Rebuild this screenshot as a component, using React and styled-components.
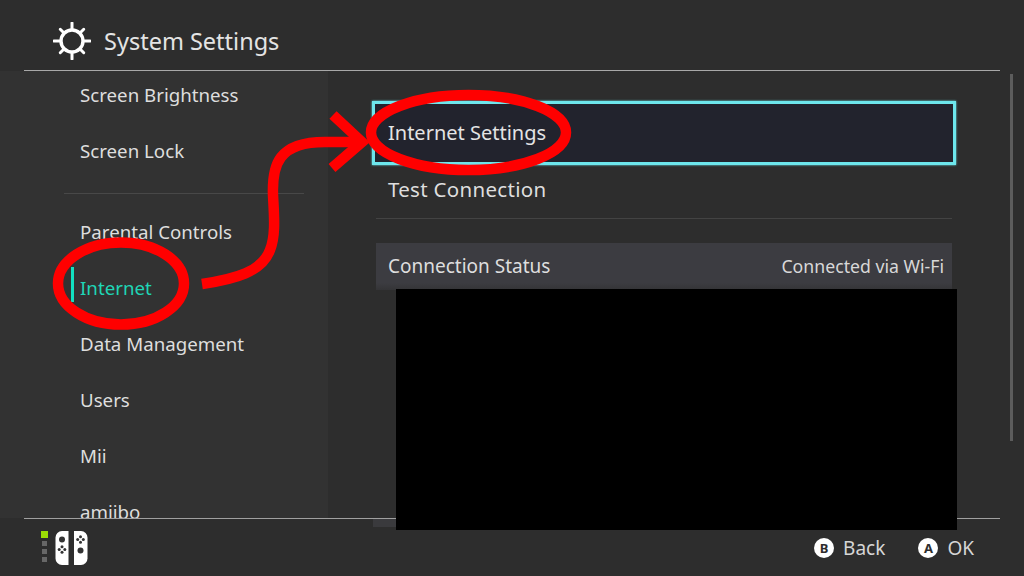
import React from 'react';
import styled, { createGlobalStyle } from 'styled-components';

const GlobalStyle = createGlobalStyle`
  html, body {
    margin: 0;
    background: #2d2d2d;
  }
`;

const Page = styled.div`
  position: relative;
  width: 1024px;
  height: 576px;
  overflow: hidden;
  display: flex;
  flex-direction: column;
  background: #2d2d2d;
  color: #dedede;
  font-family: "Noto Sans", "Open Sans", sans-serif;
`;

const Header = styled.header`
  flex: none;
  box-sizing: border-box;
  height: 71px;
  margin: 0 24px;
  padding: 12px 0 0 29px;
  display: flex;
  align-items: center;
  gap: 13px;
  border-bottom: 1px solid #a8a8a8;
`;

const Title = styled.h1`
  margin: 0;
  font-size: 23.500px;
  font-weight: 400;
  color: #e4e4e4;
`;

const Body = styled.div`
  flex: 1;
  min-height: 0;
  display: flex;
`;

const Sidebar = styled.nav`
  flex: none;
  width: 328px;
  overflow: hidden;
  background: #323232;
`;

const SideList = styled.div`
  margin-top: -5px;
`;

const SideItem = styled.div`
  height: 56px;
  padding-left: 71px;
  display: flex;
  align-items: center;
  font-size: 18.700px;
  color: ${p => (p.$active ? '#1fd6b6' : '#dedede')};
`;

const Marker = styled.span`
  flex: none;
  width: 3px;
  height: 35px;
  margin: 0 6px 5px 0;
  background: ${p => (p.$active ? '#12e0c0' : 'transparent')};
`;

const SideDivider = styled.div`
  height: 1px;
  margin: 15px 24px 9px 64px;
  background: #484848;
`;

const Content = styled.main`
  flex: none;
  width: 576px;
  margin-left: 48px;
  padding-top: 30px;
`;

const SelectedRow = styled.div`
  box-sizing: border-box;
  height: 64px;
  margin: 0 -4px;
  padding: 0 0 2px 13px;
  display: flex;
  align-items: center;
  font-size: 20px;
  background: #22232d;
  border: 3px solid #6de6ec;
  box-shadow: 0 0 2px #6de6ec;
  color: #e4e4e4;
`;

const PlainRow = styled.div`
  box-sizing: border-box;
  height: 50px;
  margin-bottom: 3px;
  padding: 0 0 2px 12px;
  display: flex;
  align-items: center;
  font-size: 20.500px;
  letter-spacing: 0.3px;
`;

const RowDivider = styled.div`
  height: 1px;
  background: #434343;
`;

const InfoRow = styled.div`
  box-sizing: border-box;
  height: 47px;
  margin-top: 24px;
  padding: 0 8px 2px 12px;
  display: flex;
  align-items: center;
  justify-content: space-between;
  font-size: 19px;
  background: linear-gradient(#3c3c41 85%, #343436);
`;

const InfoValue = styled.span`
  font-size: 17.700px;
  color: #d8d8d8;
`;

const ScrollBar = styled.div`
  flex: none;
  width: 3px;
  height: 367px;
  margin: 3px 11px 0 auto;
  background: #5c5c5c;
`;

const Footer = styled.footer`
  position: relative;
  flex: none;
  height: 57px;
  margin: 0 24px;
  display: flex;
  align-items: center;
  justify-content: space-between;
  border-top: 1px solid #a0a0a0;
`;

const FooterRemnant = styled.div`
  position: absolute;
  left: 349px;
  top: 0;
  width: 30px;
  height: 8px;
  background: #3a3a3d;
`;

const Controllers = styled.div`
  margin-left: 17px;
  display: flex;
  align-items: center;
  gap: 7px;
`;

const Leds = styled.div`
  display: flex;
  flex-direction: column;
  align-items: center;
  gap: 3px;
  margin-top: -2px;
`;

const Led = styled.span`
  width: ${p => (p.$on ? '7px' : '5px')};
  height: ${p => (p.$on ? '7px' : '5px')};
  background: ${p => (p.$on ? '#9bdc05' : '#676767')};
`;

const Hints = styled.div`
  display: flex;
  align-items: center;
  gap: 33px;
  margin-right: 26px;
`;

const Hint = styled.div`
  display: flex;
  align-items: center;
  gap: 9px;
  font-size: 19px;
  color: #d6d6d6;
`;

const Badge = styled.span`
  width: 20px;
  height: 20px;
  border-radius: 50%;
  background: #fff;
  color: #2d2d2d;
  font-size: 13px;
  font-weight: 700;
  display: flex;
  align-items: center;
  justify-content: center;
`;

const Redacted = styled.div`
  position: absolute;
  left: 396px;
  top: 289px;
  width: 561px;
  height: 241px;
  background: #000;
`;

const Annotation = styled.svg`
  position: absolute;
  left: 0;
  top: 0;
  pointer-events: none;
`;

const GearIcon = () => (
  <svg width="38" height="38" viewBox="0 0 38 38" fill="none" stroke="#fff">
    <circle cx="19" cy="19" r="11" strokeWidth="3.4" />
    {[0, 45, 90, 135, 180, 225, 270, 315].map(a => (
      <line
        key={a}
        x1="19"
        y1="7"
        x2="19"
        y2={a % 90 === 0 ? 1 : 2.4}
        strokeWidth="3"
        strokeLinecap="round"
        transform={`rotate(${a} 19 19)`}
      />
    ))}
  </svg>
);

const DotPad = ({ cx, cy }) => (
  <g fill="#333">
    <circle cx={cx} cy={cy - 2.8} r="1.5" />
    <circle cx={cx} cy={cy + 2.8} r="1.5" />
    <circle cx={cx - 2.8} cy={cy} r="1.5" />
    <circle cx={cx + 2.8} cy={cy} r="1.5" />
  </g>
);

const JoyConIcon = () => (
  <svg width="33" height="34" viewBox="0 0 33 34">
    <path d="M13.500 0V34H7A6.500 6.500 0 0 1 .5 27.500V6.500A6.500 6.500 0 0 1 7 0Z" fill="#fff" />
    <path d="M19 0V34H26A6.500 6.500 0 0 0 32.500 27.500V6.500A6.500 6.500 0 0 0 26 0Z" fill="#fff" />
    <circle cx="7" cy="8.500" r="3" fill="#333" />
    <DotPad cx={7} cy={18.500} />
    <DotPad cx={25.500} cy={8.500} />
    <circle cx="25.500" cy="19.500" r="3" fill="#333" />
  </svg>
);

const sideTop = ['Screen Brightness', 'Screen Lock'];
const sideBottom = ['Parental Controls', 'Internet', 'Data Management', 'Users', 'Mii', 'amiibo'];

const renderSideItem = label => {
  const active = label === 'Internet';
  return (
    <SideItem key={label} $active={active}>
      <Marker $active={active} />
      {label}
    </SideItem>
  );
};

const App = () => {
  return (
    <Page>
      <GlobalStyle />
      <Header>
        <GearIcon />
        <Title>System Settings</Title>
      </Header>
      <Body>
        <Sidebar>
          <SideList>
            {sideTop.map(renderSideItem)}
            <SideDivider />
            {sideBottom.map(renderSideItem)}
          </SideList>
        </Sidebar>
        <Content>
          <SelectedRow>Internet Settings</SelectedRow>
          <PlainRow>Test Connection</PlainRow>
          <RowDivider />
          <InfoRow>
            <span>Connection Status</span>
            <InfoValue>Connected via Wi-Fi</InfoValue>
          </InfoRow>
        </Content>
        <ScrollBar />
      </Body>
      <Footer>
        <FooterRemnant />
        <Controllers>
          <Leds>
            <Led $on />
            <Led />
            <Led />
            <Led />
          </Leds>
          <JoyConIcon />
        </Controllers>
        <Hints>
          <Hint>
            <Badge>B</Badge>
            Back
          </Hint>
          <Hint>
            <Badge>A</Badge>
            OK
          </Hint>
        </Hints>
      </Footer>
      <Redacted />
      <Annotation width="1024" height="576" viewBox="0 0 1024 576" fill="none" stroke="#ff0000" strokeWidth="10.500">
        <ellipse cx="121" cy="283.500" rx="63" ry="41" />
        <ellipse cx="468.500" cy="132.500" rx="97.500" ry="37.500" />
        <path d="M202 284C235 279 262 272 270 250C276 235 274 215 273 195C272 165 278 142 325 142L360 142" />
        <path d="M333 115L362 142L332 168" />
      </Annotation>
    </Page>
  );
};

export default App;
